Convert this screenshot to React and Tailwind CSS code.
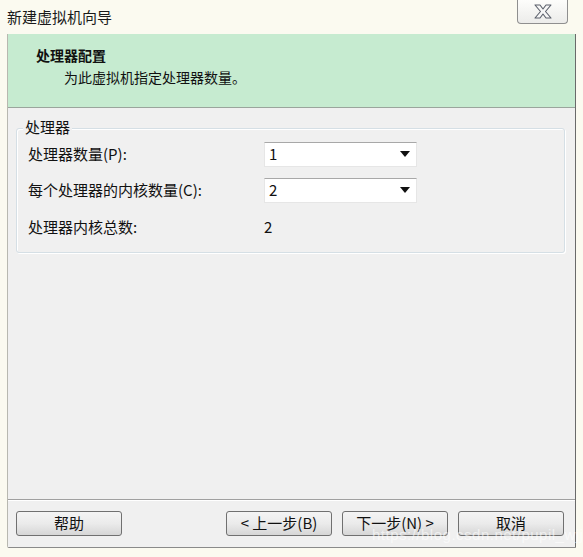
import React from 'react';

const FONT = { fontFamily: '"Noto Sans CJK SC", "Liberation Sans", sans-serif' };

function Combo({ value }) {
  return (
    <div className="w-[153px] h-[25px] bg-white border-t border-[#a8a8a8] border-x border-b border-x-[#e6e6e6] border-b-[#e6e6e6] flex items-center justify-between pl-[4px] pr-[6px]">
      <span className="text-[15px] text-[#111]">{value}</span>
      <svg width="10" height="6" viewBox="0 0 10 6">
        <path d="M0 0 L10 0 L5 6 Z" fill="#111" />
      </svg>
    </div>
  );
}

function Btn({ children, className = '' }) {
  return (
    <div className={`h-[25px] w-[106px] flex items-center justify-center rounded-[3px] border border-[#707070] bg-gradient-to-b from-[#f4f4f4] via-[#ebebeb] to-[#d6d6d6] text-[15px] text-[#111] ${className}`}>
      {children}
    </div>
  );
}

export default function App() {
  return (
    <div className="w-[583px] h-[557px] bg-[#fbfaf0] relative overflow-hidden flex flex-col" style={FONT}>
      {/* title bar */}
      <div className="h-[34px] flex items-start justify-between shrink-0">
        <div className="pl-[7px] pt-[6px] text-[15px] text-[#1a1a1a]">新建虚拟机向导</div>
        <div className="mr-[15px] w-[51px] h-[24px] rounded-b-[4px] border border-t-0 border-[#8f8f8f] bg-gradient-to-b from-[#fdfdfb] to-[#ececea] flex items-center justify-center">
          <svg width="20" height="15" viewBox="0 0 20 15">
            <path d="M2 1 L7 1 L10 5 L13 1 L18 1 L12.5 7.5 L18 14 L13 14 L10 10 L7 14 L2 14 L7.5 7.5 Z" fill="#f6f6f6" stroke="#5a5f6a" strokeWidth="1.1" strokeLinejoin="round" />
          </svg>
        </div>
      </div>

      {/* client area */}
      <div className="ml-[7px] w-[569px] h-[514px] flex flex-col border-l border-[#b8b8b0] border-r border-r-[#6a6a6a] border-b border-b-[#8a8a8a] rounded-bl-[2px]">
        <div className="h-[74px] shrink-0 bg-[#c6ebd0] border-b border-[#9aa59c] pl-[28px] pt-[10px]">
          <div className="text-[14px] font-bold text-[#111] leading-[22px]">处理器配置</div>
          <div className="pl-[28px] text-[14px] text-[#111] leading-[22px]">为此虚拟机指定处理器数量。</div>
        </div>

        <div className="flex-1 bg-[#f0f0f0] flex flex-col">
          {/* group box */}
          <div className="relative mt-[20px] ml-[8px] mr-[10px] h-[125px] border border-[#d5dfe5] rounded-[3px] shadow-[inset_1px_1px_0_#ffffff,1px_1px_0_#ffffff]">
            <div className="absolute -top-[12px] left-[6px] px-[2px] bg-[#f0f0f0] text-[15px] leading-[20px] text-[#111]">处理器</div>
            <div className="pl-[11px] pt-[12px] flex flex-col">
              <div className="flex items-center h-[26px]">
                <div className="w-[236px] text-[15px] text-[#111]">处理器数量(P):</div>
                <Combo value="1" />
              </div>
              <div className="flex items-center h-[26px] mt-[10px]">
                <div className="w-[236px] text-[15px] text-[#111]">每个处理器的内核数量(C):</div>
                <Combo value="2" />
              </div>
              <div className="flex items-center h-[26px] mt-[11px]">
                <div className="w-[236px] text-[15px] text-[#111]">处理器内核总数:</div>
                <div className="text-[15px] text-[#111]">2</div>
              </div>
            </div>
          </div>

          <div className="flex-1" />

          {/* footer */}
          <div className="h-[48px] border-t border-[#a0a0a0] shadow-[inset_0_1px_0_#ffffff] flex items-start pt-[11px] pl-[8px] relative">
            <Btn>帮助</Btn>
            <Btn className="ml-[104px]">&lt; 上一步(B)</Btn>
            <Btn className="ml-[10px]">下一步(N) &gt;</Btn>
            <Btn className="ml-[10px]">取消</Btn>
            <div className="absolute left-[364px] top-[24px] text-[15px] text-white/60 tracking-[0.5px] pointer-events-none" style={{ fontFamily: '"Liberation Sans", sans-serif' }}>
              https://blog.csdn.net/pupil_wjj
            </div>
          </div>
        </div>
      </div>
    </div>
  );
}
